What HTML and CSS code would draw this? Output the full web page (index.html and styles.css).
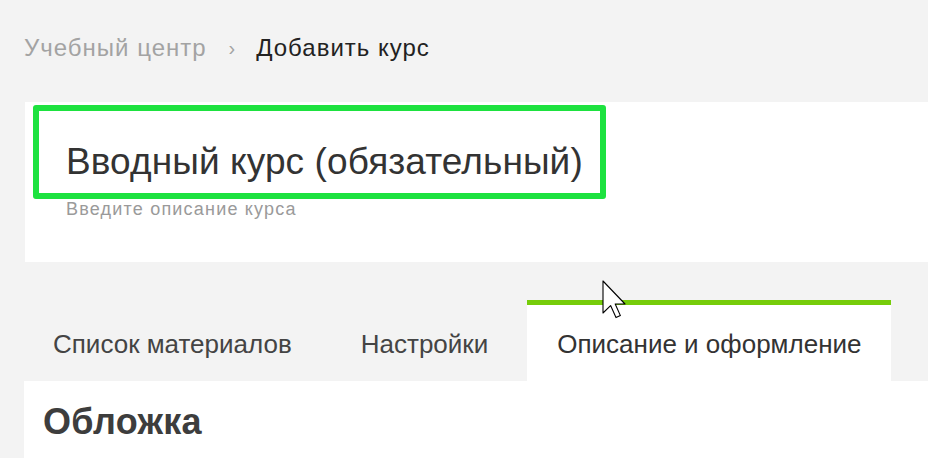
FILE: index.html
```html
<!DOCTYPE html>
<html>
<head>
    <title>Добавить курс</title>
    <link rel="stylesheet" href="styles.css">
</head>
<body>
    <div class="page">
        <div class="breadcrumbs">
            <a href="#" class="crumb">Учебный центр</a>
            <span class="sep">›</span>
            <span class="current">Добавить курс</span>
        </div>

        <div class="course-card">
            <div class="title-box">
                <h1 class="course-title">Вводный курс (обязательный)</h1>
            </div>
            <div class="course-desc">Введите описание курса</div>
        </div>

        <div class="tabs">
            <div class="tab">Список материалов</div>
            <div class="tab">Настройки</div>
            <div class="tab active">Описание и оформление</div>
        </div>

        <div class="content">
            <h2>Обложка</h2>
        </div>
    </div>

    <svg class="cursor" width="24" height="40" viewBox="0 0 12 20">
        <path d="M0.5 0.5 L0.5 16.5 L4.3 12.8 L7 18.8 L9.2 17.8 L6.6 12 L11.5 12 Z" fill="#fff" stroke="#000" stroke-width="0.55" stroke-linejoin="round"/>
    </svg>
</body>
</html>
```

FILE: styles.css
```css
* { margin: 0; padding: 0; box-sizing: border-box; font-family: "Liberation Sans", Arial, sans-serif; }
body { background: #f3f3f3; overflow: hidden; }
.page { padding-left: 24px; }

.breadcrumbs { display: flex; align-items: center; height: 96px; padding-bottom: 0; font-size: 24px; letter-spacing: 1px; }
.crumb { color: #a3a3a3; text-decoration: none; }
.sep { color: #a3a3a3; margin: 0 20px 0 22px; font-size: 20px; }
.current { color: #222; }

.course-card { background: #fff; margin-left: 1px; height: 160px; padding: 3px 0 0 8px; margin-top: 6px; }
.title-box { width: 573px; height: 94px; border: 6px solid #1de23f; border-radius: 3px; display: flex; align-items: center; padding: 20px 0 0 27px; }
.course-title { font-size: 37px; font-weight: normal; color: #333; letter-spacing: 0.1px; }
.course-desc { font-size: 18px; color: #9a9a9a; padding: 0 0 0 33px; letter-spacing: 1.2px; line-height: 20px; }

.tabs { display: flex; gap: 9px; margin-top: 38px; margin-left: -1px; height: 81px; }
.tab { display: flex; align-items: center; padding: 8px 30px 0; font-size: 26px; color: #444; }
.tab.active { background: #fff; border-top: 5px solid #76cc0a; padding-top: 3px; color: #333; }

.content { background: #fff; height: 100px; padding: 20px 0 0 19px; }
.content h2 { font-size: 36px; font-weight: bold; color: #3d3d3d; letter-spacing: 0.3px; }

.cursor { position: absolute; left: 602px; top: 280px; }
```
